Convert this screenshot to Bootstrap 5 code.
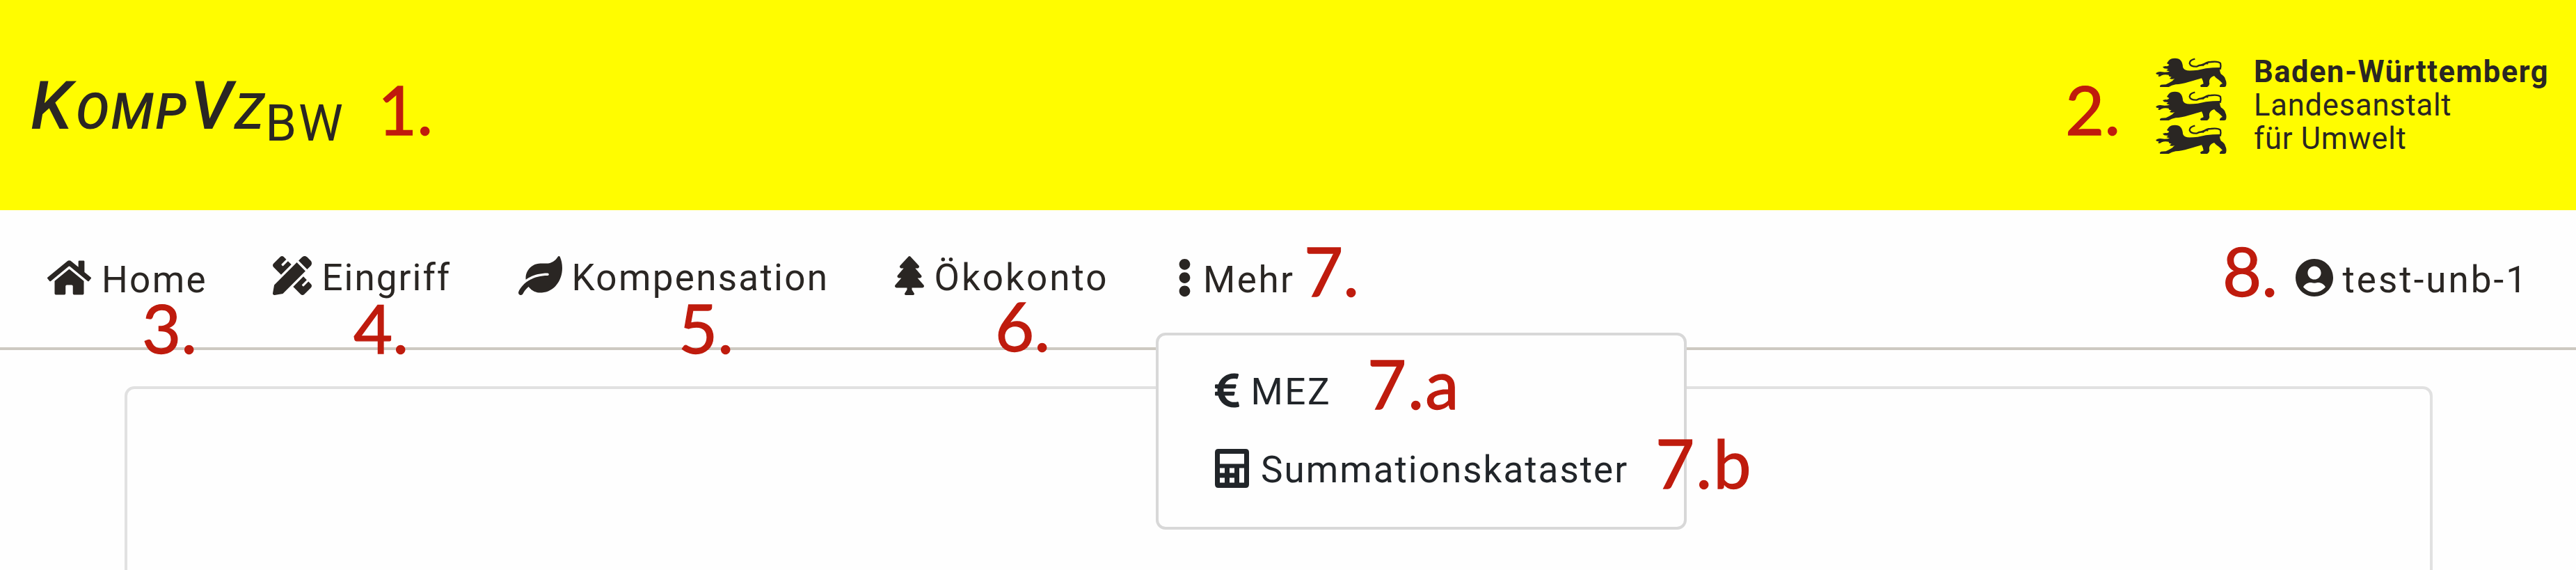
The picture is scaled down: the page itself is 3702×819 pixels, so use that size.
<!DOCTYPE html>
<html lang="de">
<head>
<meta charset="utf-8">
<meta name="viewport" content="width=device-width, initial-scale=1">
<title>KompVz BW</title>
<link href="https://cdn.jsdelivr.net/npm/bootstrap@5.3.0/dist/css/bootstrap.min.css" rel="stylesheet">
<style>
body{font-family:Roboto,"Liberation Sans",sans-serif;color:#2a2623;background:#fefefe;font-size:53px;height:819px;overflow:hidden}
svg{fill:currentColor;display:block;flex:none}

/* yellow header */
.masthead{height:302px;background:#fffc00;padding:0 0 0 44px}
.brand{font-size:97px;line-height:96px;margin-top:104px;white-space:nowrap;font-style:italic;font-weight:500}
.brand .caps{font-size:72px;font-weight:500;letter-spacing:2.8px;margin:0 2.6px 0 5px}
.brand .caps-z{font-size:72px;font-weight:500;margin-left:3px}
.brand .region{font-size:72px;font-weight:400;font-style:normal;letter-spacing:3px;vertical-align:-17px;margin-left:2px}
.agency{width:604px;margin-top:80px}
.lions{width:141px;padding-top:2.5px}
.lions svg{width:102.7px;height:42.7px;margin-bottom:5.4px}
.agency-name{font-size:43.5px;line-height:48px;letter-spacing:.8px;white-space:nowrap}
.agency-name b{letter-spacing:1.5px}

/* navigation row */
.mainnav{display:grid;grid-template-columns:323.5px 353.5px 541px 406px 1fr 403.5px;height:200.5px;padding-left:68px;border-bottom:4px solid #cdc9c1}
.entry{color:inherit;text-decoration:none;padding-top:66px;line-height:56px;white-space:nowrap}
.entry:hover{color:inherit}
.entry.low{padding-top:69px}
.entry svg,.more-menu svg{height:56px}
.entry span{padding-top:3px}
.ls-20{letter-spacing:2px}.ls-24{letter-spacing:2.3px}.ls-27{letter-spacing:2.5px}.ls-33{letter-spacing:3px}.ls-mez{letter-spacing:2.6px}

.panel{margin:52.5px 206px 0 178.5px;height:300px;border:4px solid #e1e1e1;border-radius:14px;background:#fefefe}
.more-menu{left:1661px;top:477.5px;width:763px;height:283px;border:4px solid #d8d8d8;border-radius:14px;background:#fefefe;color:#212529;padding:51.5px 0 0 81px;line-height:56px}
.more-menu a{color:inherit;text-decoration:none;margin-bottom:54px}
.more-menu span{padding-top:2px}

/* red annotation numbers laid over the interface */
.pin{position:absolute;font-family:Lato,Carlito,sans-serif;font-size:97px;line-height:100px;color:#bf1b0d;-webkit-text-stroke:1.3px #bf1b0d;white-space:nowrap}
.p1{left:543px;top:107px}.p2{left:2968px;top:107px}.p3{left:204px;top:421px}.p4{left:508px;top:421px}.p5{left:975px;top:421px}.p6{left:1430px;top:418px}.p7{left:1874px;top:339px}.p7a{left:1965px;top:501px;letter-spacing:2px}.p7b{left:2379px;top:615px;letter-spacing:2px}.p8{left:3194px;top:339px}
</style>
</head>
<body class="position-relative">
<header class="masthead d-flex justify-content-between align-items-start">
  <div class="brand">K<span class="caps">OMP</span>V<span class="caps-z">Z</span><span class="region">BW</span></div>
  <div class="agency d-flex">
    <div class="lions">
      <svg viewBox="24 18 308 128"><defs><g id="lion"><path d="M76 36Q84 22 98 21Q122 18 132 30Q140 40 141 58Q144 70 160 73Q180 74 205 71L240 64Q270 60 300 60Q299 76 305 88Q321 98 324 110Q332 126 326 142Q314 147 300 144Q298 134 312 129Q304 120 294 112Q284 106 276 96Q266 98 260 106Q252 116 256 130Q254 140 246 144L220 144Q212 140 220 134L230 130Q228 116 222 106Q200 113 166 122Q134 132 110 133Q92 136 80 144L44 145Q38 138 48 134L68 133Q80 128 96 118Q100 112 106 108Q94 112 84 108L92 100Q80 100 80 92Q62 88 50 94Q40 102 34 97L38 91Q24 90 25 84Q36 76 50 79Q66 82 84 77L70 72L78 66L60 64L54 57L66 54Q80 56 82 48L72 42Z"/><path d="M193 23Q170 28 170 42Q174 57 200 56Q214 48 228 50Q242 36 262 36Q294 32 303 42Q306 52 302 68" fill="none" stroke="currentColor" stroke-width="7"/><path d="M218 50Q232 40 250 44" fill="none" stroke="currentColor" stroke-width="5"/></g></defs><use href="#lion"/></svg>
      <svg viewBox="24 18 308 128"><use href="#lion"/></svg>
      <svg viewBox="24 18 308 128"><use href="#lion"/></svg>
    </div>
    <div class="agency-name"><b>Baden-Württemberg</b><br>Landesanstalt<br>für Umwelt</div>
  </div>
</header>

<nav class="mainnav">
  <a class="entry low d-flex align-items-start" href="#"><svg width="63" viewBox="0 0 576 512"><path d="M280.37 148.26L96 300.11V464a16 16 0 0 0 16 16l112.06-.29a16 16 0 0 0 15.92-16V368a16 16 0 0 1 16-16h64a16 16 0 0 1 16 16v95.64a16 16 0 0 0 16 16.05L464 480a16 16 0 0 0 16-16V300L295.67 148.26a12.19 12.19 0 0 0-15.3 0zM571.6 251.47L488 182.56V44.05a12 12 0 0 0-12-12h-56a12 12 0 0 0-12 12v72.61L318.47 43a48 48 0 0 0-61 0L4.34 251.47a12 12 0 0 0-1.6 16.9l25.5 31A12 12 0 0 0 45.15 301l235.22-193.74a12.19 12.19 0 0 1 15.3 0L530.9 301a12 12 0 0 0 16.9-1.6l25.5-31a12 12 0 0 0-1.7-16.93z"/></svg><span class="ls-24" style="margin-left:15px">Home</span></a>
  <a class="entry d-flex align-items-start" href="#"><svg width="56" viewBox="0 0 512 512"><path d="M109.46 244.04l134.58-134.56-44.12-44.12-61.68 61.68a7.919 7.919 0 0 1-11.21 0l-11.21-11.21c-3.1-3.1-3.1-8.12 0-11.21l61.68-61.68-33.64-33.65C131.47-3.1 111.39-3.1 99 9.29L9.29 99c-12.38 12.39-12.39 32.47 0 44.86l100.17 100.18zm388.47-116.8c18.76-18.76 18.75-49.17 0-67.93l-45.25-45.25c-18.76-18.76-49.18-18.76-67.95 0l-46.02 46.01 113.2 113.2 46.02-46.03zM316.08 82.71l-297 296.96L.32 487.11c-2.53 14.49 10.09 27.11 24.59 24.56l107.45-18.84L429.28 195.9 316.08 82.71zm186.63 285.43l-33.64-33.64-61.68 61.68c-3.1 3.1-8.12 3.1-11.21 0l-11.21-11.21c-3.09-3.1-3.09-8.12 0-11.21l61.68-61.68-44.14-44.14L267.93 402.5l100.21 100.2c12.39 12.39 32.47 12.39 44.86 0l89.71-89.7c12.39-12.39 12.39-32.47 0-44.86z"/></svg><span class="ls-20" style="margin-left:15px">Eingriff</span></a>
  <a class="entry d-flex align-items-start" href="#"><svg width="63" viewBox="0 0 576 512"><path d="M546.2 9.7c-5.6-12.5-21.6-13-28.3-1.2C486.9 62.4 431.4 96 368 96h-80C182 96 96 182 96 288c0 7 .8 13.7 1.5 20.5C161.3 262.8 253.4 224 384 224c8.8 0 16 7.2 16 16s-7.2 16-16 16C132.6 256 26 410.1 2.4 468c-6.6 16.3 1.2 34.9 17.5 41.6 16.4 6.8 35-1.1 41.8-17.3 1.5-3.6 20.9-47.9 71.9-90.6 32.4 43.9 94 85.8 174.9 77.2C465.5 467.5 576 326.7 576 154.3c0-50.2-10.8-102.2-29.8-144.6z"/></svg><span class="ls-24" style="margin-left:13.5px">Kompensation</span></a>
  <a class="entry d-flex align-items-start" href="#"><svg width="42" viewBox="0 0 384 512"><path d="M378.31 378.49L298.42 288h30.63c9.01 0 16.98-5 20.78-13.06 3.8-8.04 2.55-17.26-3.28-24.05L268.42 160h28.89c9.1 0 17.3-5.35 20.86-13.61 3.52-8.13 1.86-17.59-4.24-24.08L203.66 4.83c-6.03-6.45-17.28-6.45-23.32 0L70.06 122.31c-6.1 6.49-7.75 15.95-4.24 24.08C69.38 154.65 77.59 160 86.69 160h28.89l-78.14 90.91c-5.81 6.78-7.06 15.99-3.27 24.04C37.97 283 45.93 288 54.95 288h30.63L5.69 378.49c-6 6.79-7.36 16.09-3.56 24.26 3.75 8.05 12 13.25 21.01 13.25H160v24.45l-30.29 48.4c-5.32 10.64 2.42 23.16 14.31 23.16h95.96c11.89 0 19.63-12.52 14.31-23.16L224 440.45V416h136.86c9.01 0 17.26-5.2 21.01-13.25 3.8-8.17 2.44-17.47-3.56-24.26z"/></svg><span class="ls-33" style="margin-left:14.5px">Ökokonto</span></a>
  <a class="entry low d-flex align-items-start" href="#"><svg width="21" viewBox="0 0 192 512"><path d="M96 184c39.8 0 72 32.2 72 72s-32.2 72-72 72-72-32.2-72-72 32.2-72 72-72zM24 80c0 39.8 32.2 72 72 72s72-32.2 72-72S135.8 8 96 8 24 40.2 24 80zm0 352c0 39.8 32.2 72 72 72s72-32.2 72-72-32.2-72-72-72-72 32.2-72 72z"/></svg><span class="ls-27" style="margin-left:16px">Mehr</span></a>
  <a class="entry low d-flex align-items-start" href="#"><svg width="54" viewBox="0 0 496 512"><path d="M248 8C111 8 0 119 0 256s111 248 248 248 248-111 248-248S385 8 248 8zm0 96c48.6 0 88 39.4 88 88s-39.4 88-88 88-88-39.4-88-88 39.4-88 88-88zm0 344c-58.7 0-111.3-26.6-146.5-68.2 18.8-35.4 55.6-59.8 98.5-59.8 2.4 0 4.8.4 7.1 1.1 13 4.2 26.6 6.9 40.9 6.9 14.3 0 28-2.7 40.9-6.9 2.3-.7 4.7-1.1 7.1-1.1 42.9 0 79.7 24.4 98.5 59.8C359.3 421.4 306.7 448 248 448z"/></svg><span class="ls-33" style="margin-left:14px">test-unb-1</span></a>
</nav>

<main class="panel"></main>

<div class="more-menu position-absolute">
  <a class="d-flex align-items-start" href="#"><svg width="35" viewBox="0 0 320 512"><path d="M310.706 413.765c-1.314-6.63-7.835-10.872-14.424-9.369-10.692 2.439-27.422 5.413-45.426 5.413-56.763 0-101.929-34.79-121.461-85.449h113.689a12 12 0 0 0 11.708-9.369l6.373-28.36c1.686-7.502-4.019-14.631-11.708-14.631H115.22c-1.21-14.328-1.414-28.287.137-42.245H261.95a12 12 0 0 0 11.723-9.434l6.512-29.755c1.638-7.484-4.061-14.566-11.723-14.566H130.184c20.633-44.991 62.69-75.03 117.619-75.03 14.486 0 28.564 2.25 37.851 4.145 6.216 1.268 12.347-2.498 14.002-8.623l11.991-44.368c1.822-6.741-2.465-13.616-9.326-14.917C290.217 34.912 270.71 32 249.635 32 152.451 32 74.03 92.252 45.075 176H12c-6.627 0-12 5.373-12 12v29.755c0 6.627 5.373 12 12 12h21.569c-1.009 13.607-1.181 29.287-.181 42.245H12c-6.627 0-12 5.373-12 12v28.36c0 6.627 5.373 12 12 12h30.114C67.139 414.692 145.264 480 249.635 480c26.301 0 48.562-4.544 61.101-7.788 6.167-1.595 10.027-7.708 8.788-13.957l-8.818-44.49z"/></svg><span class="ls-mez" style="margin-left:16.5px">MEZ</span></a>
  <a class="d-flex align-items-start" href="#"><svg width="49" viewBox="0 0 49 56"><path fill-rule="evenodd" d="M5 0H44Q49 0 49 5V51Q49 56 44 56H5Q0 56 0 51V5Q0 0 5 0ZM7 7V21.500H42V7ZM7 27.500V34.500H14V27.500ZM21 27.500V34.500H28V27.500ZM7 41.500V48.500H14V41.500ZM21 41.500V48.500H28V41.500ZM35 27.500V48.500H42V27.500Z"/></svg><span class="ls-20" style="margin-left:17px">Summationskataster</span></a>
</div>

<div class="pin p1">1.</div>
<div class="pin p2">2.</div>
<div class="pin p3">3.</div>
<div class="pin p4">4.</div>
<div class="pin p5">5.</div>
<div class="pin p6">6.</div>
<div class="pin p7">7.</div>
<div class="pin p7a">7.a</div>
<div class="pin p7b">7.b</div>
<div class="pin p8">8.</div>
</body>
</html>
